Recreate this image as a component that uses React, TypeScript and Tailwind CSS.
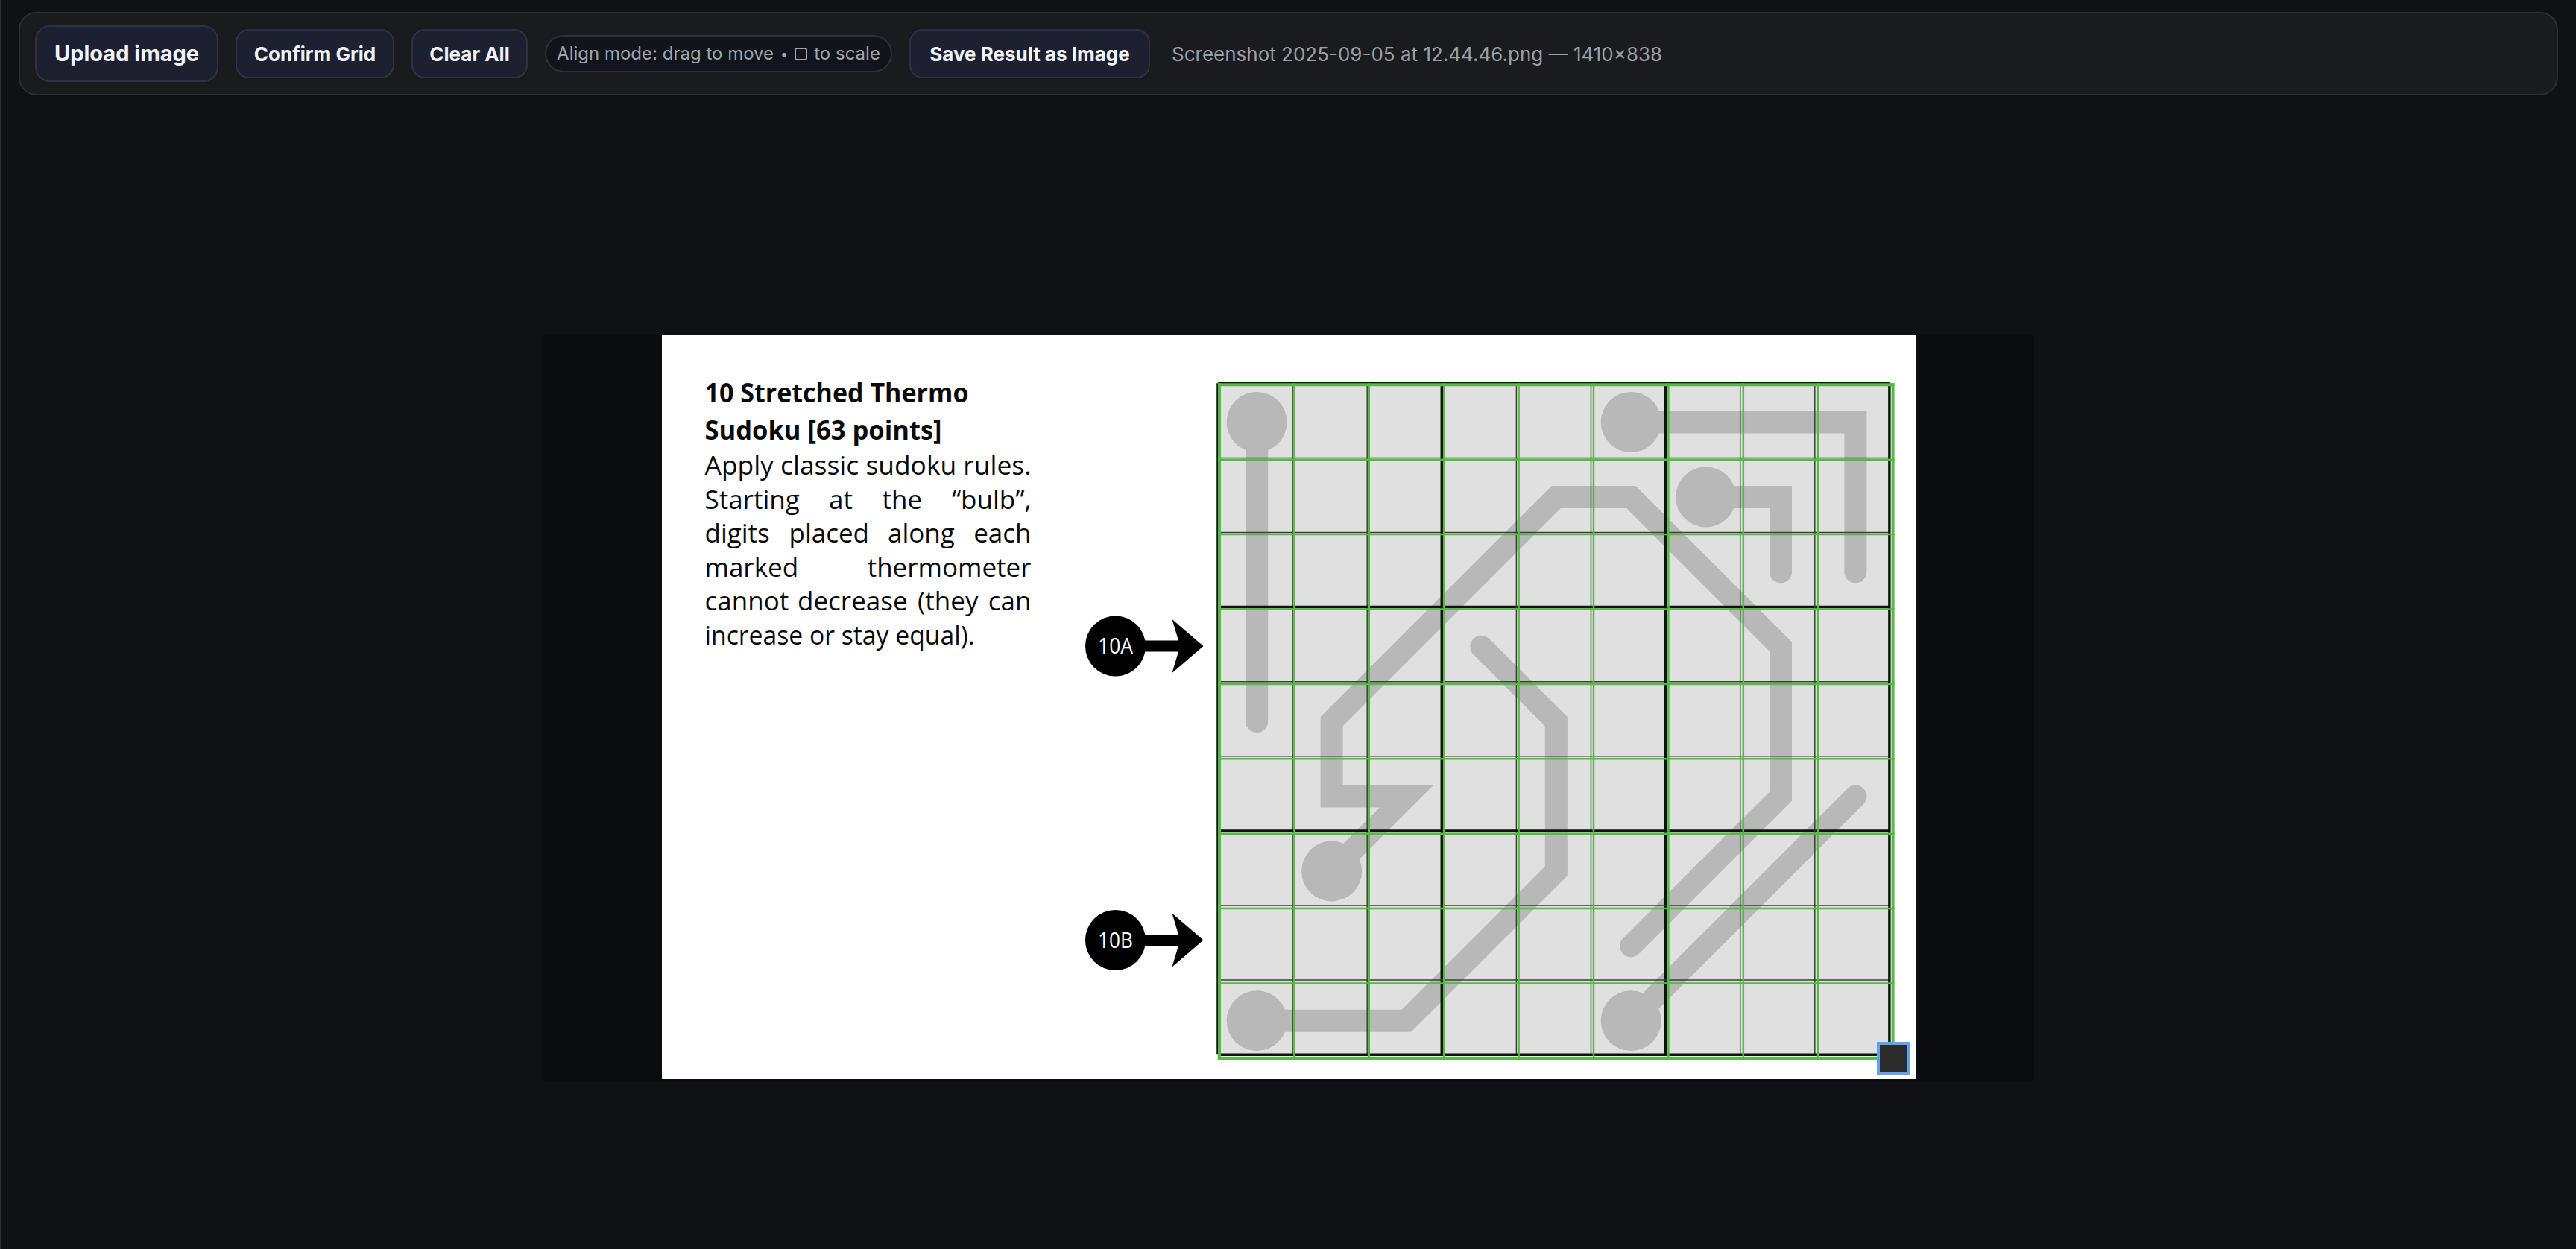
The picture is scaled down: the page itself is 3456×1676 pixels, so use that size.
import React from 'react';

// puzzle screenshot geometry (px inside the 1683x998 image)
const CELL = 100.4;
const GX = 748;
const GY = 66.3;
const TEXT_L = 57.5;
const TEXT_R = 495.5;

const at = (c: number, r: number) => [GX + c * CELL, GY + r * CELL];
const pts = (list: number[][]) => list.map(([c, r]) => at(c, r).join(',')).join(' ');

const thermos: { bulb: number[]; path: number[][] }[] = [
  { bulb: [0.5, 0.5], path: [[0.5, 0.5], [0.5, 4.5]] },
  { bulb: [5.5, 0.5], path: [[5.5, 0.5], [8.5, 0.5], [8.5, 2.5]] },
  { bulb: [6.5, 1.5], path: [[6.5, 1.5], [7.5, 1.5], [7.5, 2.5]] },
  {
    bulb: [1.5, 6.5],
    path: [[1.5, 6.5], [2.5, 5.5], [1.5, 5.5], [1.5, 4.5], [4.5, 1.5], [5.5, 1.5], [7.5, 3.5], [7.5, 5.5], [5.5, 7.5]],
  },
  { bulb: [5.5, 8.5], path: [[5.5, 8.5], [8.5, 5.5]] },
  { bulb: [0.5, 8.5], path: [[0.5, 8.5], [2.5, 8.5], [4.5, 6.5], [4.5, 4.5], [3.5, 3.5]] },
];

// whole lines squeezed to the measured width
const fitted: { y: number; text: string; len: number; bold?: boolean }[] = [
  { y: 90, text: '10 Stretched Thermo', len: 354, bold: true },
  { y: 140, text: 'Sudoku [63 points]', len: 318, bold: true },
  { y: 187, text: 'Apply classic sudoku rules.', len: 438 },
  { y: 414.5, text: 'increase or stay equal).', len: 362 },
];

// justified lines: first word at left edge, last word on right edge
const justified: { y: number; words: [string, number][] }[] = [
  { y: 232.5, words: [['Starting', TEXT_L], ['at', 224], ['the', 295.5], ['“bulb”,', TEXT_R]] },
  { y: 278, words: [['digits', TEXT_L], ['placed', 170.5], ['along', 303], ['each', TEXT_R]] },
  { y: 323.5, words: [['marked', TEXT_L], ['thermometer', TEXT_R]] },
  { y: 369, words: [['cannot', TEXT_L], ['decrease', 182], ['(they', 343], ['can', TEXT_R]] },
];

const serif = "'Open Sans', 'Noto Sans', sans-serif";

function Marker({ cy, label }: { cy: number; label: string }) {
  return (
    <g fill="#000">
      <circle cx={608.5} cy={cy} r={40.5} />
      <rect x={640} y={cy - 7.5} width={56} height={15} />
      <path d={`M684.5 ${cy - 36} L726.5 ${cy} L684.5 ${cy + 36} L693 ${cy + 7.5} L693 ${cy - 7.5} Z`} />
      <text
        x={608.5}
        y={cy + 10}
        textAnchor="middle"
        fontSize={29}
        fill="#fff"
        textLength={47}
        lengthAdjust="spacingAndGlyphs"
        fontFamily={serif}
      >
        {label}
      </text>
    </g>
  );
}

function PuzzleImage() {
  const bx = GX - 2;
  const by = GY - 2;
  const bc = 100.1;
  const idx = Array.from({ length: 10 }, (_, i) => i);

  return (
    <svg width={1683} height={998} viewBox="0 0 1683 998" className="block">
      <rect width={1683} height={998} fill="#fff" />

      <g fill="#0a0a0a" fontFamily={serif} fontSize={35}>
        {fitted.map((l) => (
          <text
            key={l.text}
            x={TEXT_L}
            y={l.y}
            fontWeight={l.bold ? 700 : 400}
            textLength={l.len}
            lengthAdjust="spacingAndGlyphs"
          >
            {l.text}
          </text>
        ))}
        {justified.map((line) =>
          line.words.map(([w, x], i) => (
            <text key={w} x={x} y={line.y} textAnchor={i === line.words.length - 1 ? 'end' : 'start'}>
              {w}
            </text>
          )),
        )}
      </g>

      <Marker cy={417} label="10A" />
      <Marker cy={811.5} label="10B" />

      {/* the puzzle grid underneath */}
      <rect x={bx} y={by} width={bc * 9} height={bc * 9} fill="#e0e0e0" />
      {thermos.map((t, i) => {
        const [cx, cy] = at(t.bulb[0], t.bulb[1]);
        return (
          <g key={i} fill="#b8b8b8" stroke="#b8b8b8">
            <polyline
              points={pts(t.path)}
              fill="none"
              strokeWidth={30}
              strokeLinecap="round"
              strokeLinejoin="miter"
              strokeMiterlimit={4}
            />
            <circle cx={cx} cy={cy} r={40.5} stroke="none" />
          </g>
        );
      })}
      {idx.map((i) => (
        <g key={`b${i}`} stroke={i % 3 === 0 ? '#111' : '#3c3c3c'} strokeWidth={i % 3 === 0 ? 3.5 : 1.5}>
          <line x1={bx + i * bc} y1={by} x2={bx + i * bc} y2={by + 9 * bc} />
          <line x1={bx} y1={by + i * bc} x2={bx + 9 * bc} y2={by + i * bc} />
        </g>
      ))}

      {/* alignment overlay */}
      {idx.map((i) => (
        <g key={`g${i}`} stroke="#50bd3c" strokeWidth={i === 0 || i === 9 ? 4 : 2.5}>
          <line x1={GX + i * CELL} y1={GY - 2} x2={GX + i * CELL} y2={GY + 9 * CELL + 2} />
          <line x1={GX - 2} y1={GY + i * CELL} x2={GX + 9 * CELL + 2} y2={GY + i * CELL} />
        </g>
      ))}
    </svg>
  );
}

export default function App() {
  const btn =
    'flex items-center justify-center rounded-[18px] border-2 border-[#2f3340] bg-[#1d2030] font-bold text-[#f1f2f6]';

  return (
    <div className="min-h-screen border-l-2 border-[#2e3036] bg-[#101115] [font-family:Inter,'Liberation_Sans',sans-serif]">
      <div className="pl-[23px] pr-[24px] pt-4">
        <div className="flex h-[112px] items-center gap-[23px] rounded-[24px] border-2 border-[#2a2d34] bg-[#1a1b1f] px-[20px]">
          <button className={`${btn} h-[76px] w-[246px] rounded-[20px] text-[29px]`}>Upload image</button>
          <button className={`${btn} h-[66px] w-[213px] text-[26px]`}>Confirm Grid</button>
          <button className={`${btn} h-[66px] w-[156px] text-[26px]`}>Clear All</button>
          <div className="flex h-[50px] w-[466px] items-center justify-center gap-[9px] rounded-full border-2 border-[#2c303a] bg-[#12141b] text-[24px] text-[#9ea3ad]">
            <span>Align mode: drag to move</span>
            <span className="text-[18px]">•</span>
            <span className="inline-block h-[17px] w-[17px] rounded-[3px] border-2 border-[#9ea3ad]" />
            <span>to scale</span>
          </div>
          <button className={`${btn} h-[66px] w-[323px] text-[26px]`}>Save Result as Image</button>
          <span className="ml-[6px] text-[26px] text-[#9a9fa8]">Screenshot 2025-09-05 at 12.44.46.png — 1410×838</span>
        </div>
      </div>

      <main className="flex justify-center pt-[322px]">
        <div className="flex h-[1000px] w-[2000px] items-start justify-center bg-[#0b0c0f]">
          <div className="relative h-[998px] w-[1683px] bg-white">
            <PuzzleImage />
            <div className="absolute left-[1630px] top-[948px] h-[44px] w-[44px] border-4 border-[#63a1ee] bg-[#2b2b2b]" />
          </div>
        </div>
      </main>
    </div>
  );
}
